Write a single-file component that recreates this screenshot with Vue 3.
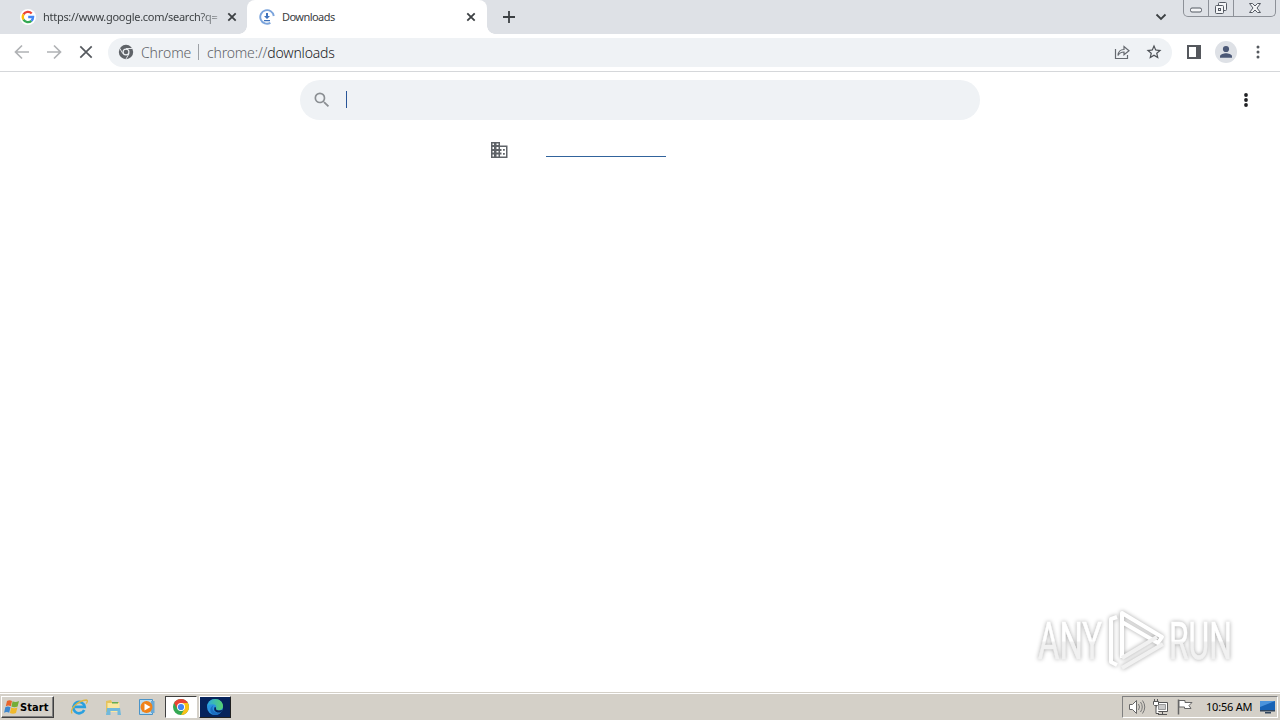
<script setup>
import { ref } from 'vue';

const query = ref('');

const tabs = [
  { id: 1, title: 'https://www.google.com/search?q=', icon: 'google', active: false },
  { id: 2, title: 'Downloads', icon: 'download', active: true }
];
</script>

<template>
  <div class="desktop">
    <header class="tab-strip">
      <div v-for="tab in tabs" :key="tab.id" class="tab" :class="{ active: tab.active }">
        <svg v-if="tab.icon === 'google'" class="favicon" viewBox="0 0 16 16">
          <circle cx="8" cy="8" r="8" fill="#fff" />
          <g fill="none" stroke-width="2.3">
            <path d="M3.5 5.4A5.1 5.1 0 0 1 11.7 4.5" stroke="#ea4335" />
            <path d="M3.5 5.4a5.1 5.1 0 0 0 0 5.2" stroke="#fbbc05" />
            <path d="M3.5 10.6a5.1 5.1 0 0 0 7.9 1.2" stroke="#34a853" />
            <path d="M11.4 11.8A5.1 5.1 0 0 0 13.1 8H8.2" stroke="#4285f4" />
          </g>
        </svg>
        <svg v-else class="favicon" viewBox="0 0 16 16">
          <path d="M11.4 13.9A6.8 6.8 0 1 1 14.8 7" fill="none" stroke="#7ba4dc" stroke-width="1.9" />
          <path d="M7 4h2v3h2L8 10 5 7h2zM5 11h6v1.200H5z" fill="#3f73bd" />
        </svg>
        <span class="title">{{ tab.title }}</span>
        <svg class="close" viewBox="0 0 10 10"><path d="M1.3 1.3l7.4 7.4M8.7 1.3L1.3 8.7" /></svg>
      </div>
      <svg class="new-tab" viewBox="0 0 12 12"><path d="M6 0v12M0 6h12" /></svg>
      <svg class="tab-search" viewBox="0 0 12 8"><path d="M1.5 1.5L6 6l4.5-4.5" /></svg>
      <div class="window-buttons">
        <span class="wb min"><svg width="14" height="6" viewBox="0 0 14 6"><rect x="1.5" y="1" width="11" height="4" rx="1.5" /></svg></span>
        <span class="wb max">
          <svg width="14" height="14" viewBox="0 0 14 14">
            <rect x="4.5" y="1.5" width="8" height="8" rx="1" />
            <rect x="1.5" y="4.5" width="8" height="8" rx="1" />
            <rect x="4.5" y="7.5" width="2" height="2" />
          </svg>
        </span>
        <span class="wb exit">
          <svg width="14" height="12" viewBox="0 0 14 12"><path d="M1.5 1.5h3L7 4l2.5-2.500h3L9 6l3.500 4.500h-3L7 8l-2.500 2.500h-3L5 6z" /></svg>
        </span>
      </div>
    </header>

    <nav class="toolbar">
      <svg class="nav-icon dim" viewBox="0 0 16 16"><path d="M15 8H2M8 1.5L1.500 8 8 14.500" /></svg>
      <svg class="nav-icon dim" viewBox="0 0 16 16"><path d="M1 8h13M8 1.500L14.500 8 8 14.500" /></svg>
      <svg class="nav-icon" viewBox="0 0 16 16"><path d="M2.300 2.300l11.400 11.400M13.700 2.300L2.300 13.700" /></svg>
      <div class="omnibox">
        <svg class="chrome-mark" viewBox="0 0 16 16">
          <circle cx="8" cy="8" r="7.200" fill="#5f6368" />
          <path d="M8 4.500h6.500M4.900 9.700L1.700 4.200M11.100 9.700L7.800 15.300" stroke="#eff2f5" stroke-width=".9" />
          <circle cx="8" cy="8" r="3.500" fill="#eff2f5" />
          <circle cx="8" cy="8" r="2.300" fill="#5f6368" />
        </svg>
        <span class="origin">Chrome</span>
        <span class="divider"></span>
        <span class="url"><span class="scheme">chrome://</span><span class="host">downloads</span></span>
        <svg class="share" viewBox="0 0 16 16">
          <path d="M1.500 5v9.500h12V11M4 11.500c.3-4 2.200-6 6-6V2.500L15 6.700l-5 4V8c-3 0-4.600 1-6 3.500z" />
        </svg>
        <svg class="star" viewBox="0 0 24 24">
          <path d="M22 9.240l-7.190-.62L12 2 9.190 8.630 2 9.240l5.460 4.730L5.820 21 12 17.270 18.180 21l-1.630-7.030L22 9.240zM12 15.400l-3.760 2.270 1-4.280-3.320-2.880 4.380-.38L12 6.100l1.710 4.040 4.380.38-3.320 2.880 1 4.280L12 15.400z" />
        </svg>
      </div>
      <svg class="side-panel" viewBox="0 0 14 14"><path d="M1 1h12v12H1z" fill="none" stroke="#55585d" stroke-width="2" /><path d="M9 1h4v12H9z" fill="#55585d" /></svg>
      <svg class="avatar" viewBox="0 0 22 22">
        <circle cx="11" cy="11" r="11" fill="#dee1e6" />
        <circle cx="11" cy="8" r="3.100" fill="#4b5876" />
        <path d="M5 16.700v-1.500c0-2 4-3 6-3s6 1 6 3v1.500z" fill="#4b5876" />
      </svg>
      <svg class="dots" viewBox="0 0 4 14"><circle cx="2" cy="2" r="1.500" /><circle cx="2" cy="7" r="1.500" /><circle cx="2" cy="12" r="1.500" /></svg>
    </nav>

    <main class="page">
      <div class="page-head">
        <label class="search">
          <svg viewBox="0 0 24 24">
            <path d="M15.500 14h-.79l-.28-.27A6.471 6.471 0 0 0 16 9.500 6.500 6.500 0 1 0 9.500 16c1.610 0 3.090-.59 4.230-1.570l.27.28v.79l5 4.990L20.490 19l-4.990-5zm-6 0C7.010 14 5 11.990 5 9.500S7.010 5 9.500 5 14 7.010 14 9.500 11.990 14 9.500 14z" />
          </svg>
          <span class="caret"></span>
          <input v-model="query" type="text" />
        </label>
        <svg class="dots dark" viewBox="0 0 4 14"><circle cx="2" cy="2" r="1.900" /><circle cx="2" cy="7" r="1.900" /><circle cx="2" cy="12" r="1.900" /></svg>
      </div>
      <div class="managed">
        <svg viewBox="0 0 20 20">
          <path d="M2 2h9v3.500h7.500V18H2zM3.500 3.500V5H5V3.500zM7.500 3.500V5h2V3.500zM3.500 7v2H5V7zM7.500 7v2h2V7zM3.500 11v1.500H5V11zM7.500 11v1.500h2V11zM3.500 14.500v2H5v-2zM7.500 14.500v2h2v-2zM11 7v2h1.500v2H11v1.500h1.500v2H11v2h6V7z" fill-rule="evenodd" />
          <path d="M14 9h1.800v1.800H14zM14 13h1.800v1.800H14z" />
        </svg>
        <a></a>
      </div>

      <svg class="watermark" viewBox="0 0 210 76">
        <defs>
          <linearGradient id="letterFade" x1="0" y1="19" x2="0" y2="56" gradientUnits="userSpaceOnUse">
            <stop offset="0.5" stop-color="#fff" /><stop offset="0.56" stop-color="#f1f1f1" />
          </linearGradient>
        </defs>
        <g class="mark">
          <text x="8" y="56" textLength="64" lengthAdjust="spacingAndGlyphs">ANY</text>
          <text x="139" y="56" textLength="63" lengthAdjust="spacingAndGlyphs">RUN</text>
          <path d="M87 14l-6 2v43l6 3" />
          <path d="M92 55V10l40 24-4 6-36-21" />
          <path d="M92 55l35-21M92 65l41-24" class="shade" />
        </g>
      </svg>
    </main>

    <footer class="taskbar">
      <button class="start">
        <svg viewBox="0 0 16 16">
          <path d="M3 2c2-1.300 3.500-.8 5 0L6.800 7.300c-1.700-.9-3.200-1-5 0z" fill="#e8642b" />
          <path d="M8.600 2.300c1.800.9 3.800 1 6.400-.3L13.600 7.600c-2 .9-4.300.9-6.200 0z" fill="#74ad38" />
          <path d="M1.300 8.300c1.800-1 3.600-.8 5.200 0l-1.300 5.400c-1.600-.9-3.300-1-5.100 0z" fill="#3c87cf" />
          <path d="M7.200 8.500c1.800.9 3.900 1.100 6.200.1l-1.400 5.500c-2 1-4.200.9-6.100 0z" fill="#f0b92b" />
        </svg>
        <span>Start</span>
      </button>
      <div class="launchers">
        <span class="app">
          <svg viewBox="0 0 18 18">
            <path d="M14.200 12A5.700 5.700 0 1 1 14.700 8.900H5" fill="none" stroke="#2aa0df" stroke-width="2.700" />
            <path d="M2 15.500C-.5 11 8 2.500 16.400 2c1.500.2 1.100 2-.2 3.600" fill="none" stroke="#ddb642" stroke-width="1.300" />
          </svg>
        </span>
        <span class="app">
          <svg viewBox="0 0 18 18">
            <path d="M2 3l5-1 1 2h7v10H2z" fill="#e5c35d" />
            <path d="M3.500 5h12v9h-12z" fill="#fae7a0" />
            <path d="M8 4h6v1.500H8z" fill="#65ad54" />
            <path d="M3 10h13l1 7h-3.500v-4h-7v4H2z" fill="#72b9db" />
          </svg>
        </span>
        <span class="app">
          <svg viewBox="0 0 18 18">
            <path d="M1.500 1.500h13v15h-13z" fill="#b8dcf2" stroke="#4b94c8" />
            <path d="M13 3h3.500v12H13z" fill="#69a9d6" />
            <circle cx="8.500" cy="9" r="6" fill="#f08219" />
            <path d="M6.500 5.500v7L12.500 9z" fill="#fff" />
          </svg>
        </span>
        <span class="app pressed">
          <svg viewBox="0 0 18 18">
            <circle cx="9" cy="9" r="8" fill="#34a853" />
            <path d="M9 5h6.900A8 8 0 0 1 9 17l3.500-6z" fill="#fbc116" />
            <path d="M2.100 5A8 8 0 0 1 15.900 5H9L5.500 11z" fill="#ea4335" />
            <circle cx="9" cy="9" r="4" fill="#fff" />
            <circle cx="9" cy="9" r="3.100" fill="#4285f4" />
          </svg>
        </span>
        <span class="app edge">
          <svg viewBox="0 0 18 18">
            <defs>
              <linearGradient id="edgeTop" x1="0" y1="0" x2="1" y2="0">
                <stop offset="0" stop-color="#29a8e3" /><stop offset="1" stop-color="#57d36d" />
              </linearGradient>
            </defs>
            <circle cx="9" cy="9" r="8" fill="#2a93e0" />
            <path d="M1 8.500C2 4 5 1 9 1c5 0 8 3.500 8 7 0 3-2 4.200-4.500 4.200-2 0-3-.8-2.500-1.700.7-1.200.5-4-3-4.200C4.300 6.200 2 7 1 8.500z" fill="url(#edgeTop)" />
            <path d="M6.500 10c0 3.500 3.500 5.500 8.500 4-1 1.500-3 3-5.800 3C5.500 17 3 13 5 9.500c.7-1.200 1.700-2 3-2.500-1 .8-1.500 1.700-1.500 3z" fill="#1b6cc0" />
            <path d="M10 11c0 1.300 3 2 6.400.7l-1.300 2.500C10 15.500 7 12.500 8.600 9.200 9.500 8.500 10.400 10 10 11z" fill="#06235b" />
          </svg>
        </span>
      </div>
      <div class="tray">
        <svg class="tray-icon" viewBox="0 0 18 18">
          <path d="M1.500 6.500h3l4-4v13l-4-4h-3z" fill="#fff" stroke="#666" />
          <path d="M10.500 6q2 3 0 6M12.500 4q3.500 5 0 10M14.500 2.500q4.500 6.500 0 13" fill="none" stroke="#777" />
        </svg>
        <svg class="tray-icon net" viewBox="0 0 18 18">
          <path d="M4.500 4.500h11v9h-11zM6 16.500h9M10.500 13.500v3" fill="#fff" stroke="#555" />
          <path d="M6.500 6.500h7v5h-7z" fill="#c9c9c9" stroke="#999" />
          <path d="M1.500 3.500h5v3l-1 1h-3l-1-1zM2.500 3V1M5.500 3V1M4 7.500v8h3" fill="#fff" stroke="#555" />
        </svg>
        <svg class="tray-icon flag" viewBox="0 0 18 18">
          <path d="M2.500 1.500v15" stroke="#666" stroke-width="1.500" />
          <path d="M3 2.500h6v2h7l-3 3 2 3H8.500v-1.500H3z" fill="#fff" stroke="#666" />
        </svg>
        <span class="clock">10:56 AM</span>
        <svg class="tray-icon screen" viewBox="0 0 18 18">
          <path d="M1 3h15v9H1z" fill="#1762b5" /><path d="M1 3h15L1 9z" fill="#4a93dc" />
          <path d="M1 12h15v1.500H1zM6 14h6v1.500H6z" fill="#31465e" />
        </svg>
      </div>
    </footer>
  </div>
</template>

<style>
body {
  margin: 0;
  background: #fff;
}
</style>

<style scoped>
.desktop {
  display: flex;
  flex-direction: column;
  width: 1280px;
  height: 720px;
  overflow: hidden;
  background: #fff;
  font-family: "Noto Sans", "Open Sans", sans-serif;
}

svg {
  display: block;
  flex: none;
}

.tab-strip {
  display: flex;
  align-items: center;
  height: 34px;
  flex: none;
  padding-left: 8px;
  background: #dee1e6;
}

.tab {
  position: relative;
  box-sizing: border-box;
  display: flex;
  align-items: center;
  width: 240px;
  height: 34px;
  padding: 0 11px 0 12px;
  font-size: 11px;
  color: #3c4043;
}

.tab:first-child {
  width: 239px;
  padding-right: 10px;
}

.tab.active {
  background: #fff;
  border-radius: 8px 8px 0 0;
}

.tab.active::before,
.tab.active::after {
  content: '';
  position: absolute;
  bottom: 0;
  width: 8px;
  height: 8px;
}

.tab.active::before {
  left: -8px;
  background: radial-gradient(circle at 0 0, transparent 7.5px, #fff 8px);
}

.tab.active::after {
  right: -8px;
  background: radial-gradient(circle at 100% 0, transparent 7.5px, #fff 8px);
}

.favicon {
  width: 16px;
  height: 16px;
}

.title {
  flex: 1;
  margin: 0 8px 0 7px;
  padding-bottom: 2px;
  letter-spacing: -0.55px;
  white-space: nowrap;
}

.tab:first-child .title {
  letter-spacing: -0.28px;
  -webkit-mask-image: linear-gradient(90deg, #000 155px, rgba(0, 0, 0, 0.3) 176px);
  mask-image: linear-gradient(90deg, #000 155px, rgba(0, 0, 0, 0.3) 176px);
}

.close {
  width: 10px;
  height: 10px;
}

.close path,
.new-tab path,
.tab-search path {
  fill: none;
  stroke: #3c4043;
  stroke-width: 1.8;
}

.new-tab {
  width: 12px;
  height: 12px;
  margin-left: 16px;
}

.tab-search {
  width: 12px;
  height: 8px;
  margin-left: auto;
}

.window-buttons {
  box-sizing: border-box;
  display: flex;
  align-self: flex-start;
  width: 93px;
  height: 17px;
  margin: 0 4px 0 16px;
  border: 1px solid #8d9198;
  border-top: 0;
  border-radius: 0 0 5px 5px;
}

.wb {
  box-sizing: border-box;
  display: flex;
  align-items: center;
  justify-content: center;
  width: 25px;
  border-right: 1px solid #8d9198;
}

.wb.min {
  padding-top: 4px;
}

.wb.exit {
  flex: 1;
  border: 0;
}

.wb svg * {
  fill: #f4f5f7;
  stroke: #555a63;
  stroke-width: 1;
}

.toolbar {
  box-sizing: border-box;
  display: flex;
  align-items: center;
  height: 38px;
  flex: none;
  padding: 0 20px 1px 14px;
  border-bottom: 1px solid #d5d7da;
}

.nav-icon {
  width: 16px;
  height: 16px;
  margin-right: 16px;
}

.nav-icon path {
  fill: none;
  stroke: #55595e;
  stroke-width: 1.7;
}

.nav-icon.dim path {
  stroke: #b0b2b5;
}

.omnibox {
  box-sizing: border-box;
  display: flex;
  align-items: center;
  width: 1064px;
  height: 29px;
  margin-left: -2px;
  padding: 0 10px;
  border-radius: 15px;
  background: #eff2f5;
  font-size: 14px;
  color: #5f6368;
}

.chrome-mark {
  width: 16px;
  height: 16px;
}

.origin {
  width: 50px;
  margin-left: 7px;
  font-weight: 300;
  letter-spacing: -0.1px;
}

.divider {
  width: 1px;
  height: 16px;
  margin: 0 8px 0 7px;
  background: #9da1a6;
}

.url {
  font-weight: 300;
  letter-spacing: -0.18px;
}

.host {
  color: #202124;
}

.share {
  width: 16px;
  height: 16px;
  margin-left: auto;
}

.share path {
  fill: none;
  stroke: #666a70;
  stroke-width: 1.2;
}

.star {
  width: 18px;
  height: 18px;
  margin: 0 -1px 0 15px;
  fill: #4c5055;
}

.side-panel {
  width: 14px;
  height: 14px;
  margin-left: 15px;
}

.avatar {
  width: 22px;
  height: 22px;
  margin-left: 14px;
}

.dots {
  width: 4px;
  height: 14px;
  margin-left: auto;
  fill: #55595e;
}

.page {
  position: relative;
  flex: 1;
}

.page-head {
  box-sizing: border-box;
  display: flex;
  align-items: center;
  height: 56px;
  padding: 0 32px 0 300px;
}

.dots.dark {
  fill: #202124;
}

.search {
  box-sizing: border-box;
  display: flex;
  align-items: center;
  width: 680px;
  height: 40px;
  padding: 0 20px 0 12px;
  border-radius: 20px;
  background: #eff2f5;
}

.search svg {
  width: 20px;
  height: 20px;
  fill: #8b8f93;
}

.caret {
  width: 1px;
  height: 17px;
  margin: 0 0 1px 14px;
  background: #285598;
}

.search input {
  flex: 1;
  border: 0;
  outline: 0;
  background: none;
}

.managed {
  display: flex;
  align-items: flex-start;
  padding: 12px 0 0 489px;
}

.managed svg {
  width: 20px;
  height: 20px;
  fill: #5f6368;
}

.managed a {
  width: 120px;
  height: 16px;
  margin-left: 37px;
  border-bottom: 1px solid #31639c;
}

.watermark {
  position: absolute;
  right: 40px;
  bottom: 13px;
  width: 210px;
  height: 76px;
  overflow: visible;
}

.mark {
  filter: drop-shadow(0 0 2px rgba(0, 0, 0, 0.35));
}

.mark text {
  font-family: Roboto, sans-serif;
  font-size: 51px;
  fill: url(#letterFade);
  stroke: url(#letterFade);
  stroke-width: 0.6;
}

.mark path {
  fill: none;
  stroke: #fff;
  stroke-width: 4;
  stroke-linejoin: round;
}

.mark .shade {
  stroke: #f1f1f1;
}

.taskbar {
  box-sizing: border-box;
  display: flex;
  align-items: center;
  height: 28px;
  flex: none;
  padding: 1px 2px 0 1px;
  background: #d4d0c8;
  border-top: 1px solid #d4d0c8;
  box-shadow: inset 0 1px #fff;
}

.start {
  box-sizing: border-box;
  display: flex;
  align-items: center;
  width: 53px;
  height: 22px;
  padding: 0 2px;
  border: 1px solid;
  border-color: #fff #404040 #404040 #fff;
  box-shadow: inset -1px -1px #808080;
  background: #d4d0c8;
  font: bold 11px "DejaVu Sans Condensed", "DejaVu Sans", sans-serif;
  color: #000;
}

.start svg {
  width: 16px;
  height: 16px;
}

.start span {
  letter-spacing: 0.1px;
}

.launchers {
  display: flex;
  margin-left: 8px;
}

.app {
  box-sizing: border-box;
  display: flex;
  align-items: center;
  justify-content: center;
  width: 34px;
  height: 22px;
}

.app svg {
  width: 18px;
  height: 18px;
}

.pressed {
  width: 32px;
  margin: 0 1px;
  background: #fff;
  border: 1px solid;
  border-color: #404040 #fff #fff #404040;
}

.edge {
  width: 32px;
  margin-left: 1px;
  background: #06235b;
  border: 1px solid;
  border-color: #fff #202020 #202020 #fff;
}

.tray {
  box-sizing: border-box;
  display: flex;
  align-items: center;
  width: 156px;
  height: 22px;
  margin-left: auto;
  padding-left: 5px;
  border: 1px solid;
  border-color: #808080 #fff #fff #808080;
}

.tray-icon {
  width: 18px;
  height: 18px;
}

.net {
  margin-left: 6px;
}

.flag {
  margin-left: 6px;
}

.clock {
  width: 47px;
  margin-left: 12px;
  font-size: 11px;
  line-height: 16px;
  letter-spacing: -0.2px;
  white-space: nowrap;
  color: #000;
}

.screen {
  margin-left: 6px;
}
</style>
